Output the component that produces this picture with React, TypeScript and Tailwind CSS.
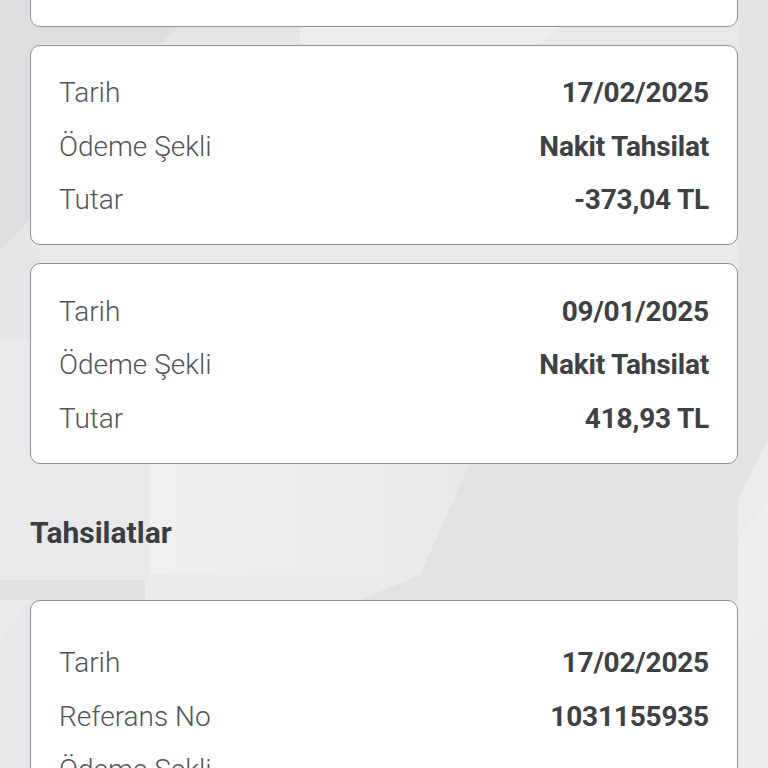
import React from "react";

type Row = { label: string; value: string };

const cards: Row[][] = [
  [
    { label: "Tarih", value: "01/01/2025" },
    { label: "Ödeme Şekli", value: "Nakit Tahsilat" },
    { label: "Tutar", value: "0,00 TL" },
  ],
  [
    { label: "Tarih", value: "17/02/2025" },
    { label: "Ödeme Şekli", value: "Nakit Tahsilat" },
    { label: "Tutar", value: "-373,04 TL" },
  ],
  [
    { label: "Tarih", value: "09/01/2025" },
    { label: "Ödeme Şekli", value: "Nakit Tahsilat" },
    { label: "Tutar", value: "418,93 TL" },
  ],
];

const tahsilat: Row[] = [
  { label: "Tarih", value: "17/02/2025" },
  { label: "Referans No", value: "1031155935" },
  { label: "Ödeme Şekli", value: "-" },
  { label: "Tutar", value: "373,04 TL" },
];

function Rows({ rows }: { rows: Row[] }) {
  return (
    <>
      {rows.map((r, i) => (
        <div key={i} className="flex h-[53.5px] items-center justify-between">
          <span className="font-light text-[28px] leading-[34px] text-[#50555a]">{r.label}</span>
          <span className="font-bold text-[28px] leading-[34px] tracking-[-0.2px] text-[#3d4146]">{r.value}</span>
        </div>
      ))}
    </>
  );
}

function Background() {
  return (
    <svg className="absolute inset-0 h-full w-full" viewBox="0 0 768 768" preserveAspectRatio="none">
      <defs>
        <linearGradient id="g1" x1="0" y1="0" x2="1" y2="0">
          <stop offset="0" stopColor="#eef0f1" />
          <stop offset="1" stopColor="#e6e8ea" />
        </linearGradient>
      </defs>
      <rect x="0" y="0" width="768" height="768" fill="#e8eaec" />
      <polygon points="0,0 300,0 300,44 0,44" fill="#dcdee0" />
      <polygon points="180,26 300,26 300,44 160,44" fill="#e4e6e8" />
      <polygon points="300,26 560,26 540,44 300,44" fill="#eceef0" />
      <polygon points="0,40 40,40 40,330 0,330" fill="#dcdee0" />
      <polygon points="0,250 40,210 40,340 0,340" fill="#e4e6e8" />
      <polygon points="738,0 768,0 768,440 738,500" fill="#e1e3e5" />
      <polygon points="738,500 768,440 768,768 738,768" fill="#e9ebed" />
      <polygon points="0,463 150,463 150,600 0,600" fill="#e7e9eb" />
      <polygon points="150,463 470,463 420,575 150,575" fill="url(#g1)" />
      <polygon points="470,463 738,463 738,600 360,600 420,575" fill="#e0e2e4" />
      <polygon points="0,640 30,600 150,600 150,768 0,768" fill="#e5e7e9" />
      <polygon points="738,540 768,500 768,620 738,650" fill="#eceef0" />
      <polygon points="0,580 145,580 145,600 0,600" fill="#dee0e2" />
    </svg>
  );
}

export default function App() {
  return (
    <div
      className="relative h-[768px] w-[768px] overflow-hidden"
      style={{ fontFamily: "Roboto, 'Liberation Sans', sans-serif" }}
    >
      <Background />
      <div className="relative flex flex-col px-[30px]">
        <div className="mt-[-174px] flex flex-col gap-[18px]">
          {cards.map((rows, i) => (
            <div
              key={i}
              className="rounded-[10px] border-[1.5px] border-[#8d9194] bg-white pl-[28px] pr-[28px] pt-[21px] pb-[17px]"
            >
              <Rows rows={rows} />
            </div>
          ))}
        </div>
        <h2 className="mt-[52px] mb-[50px] font-bold text-[30px] leading-[34px] text-[#3a3e43]">Tahsilatlar</h2>
        <div className="rounded-[10px] border-[1.5px] border-[#8d9194] bg-white pl-[28px] pr-[28px] pt-[36px] pb-[18px]">
          <Rows rows={tahsilat} />
        </div>
      </div>
    </div>
  );
}
